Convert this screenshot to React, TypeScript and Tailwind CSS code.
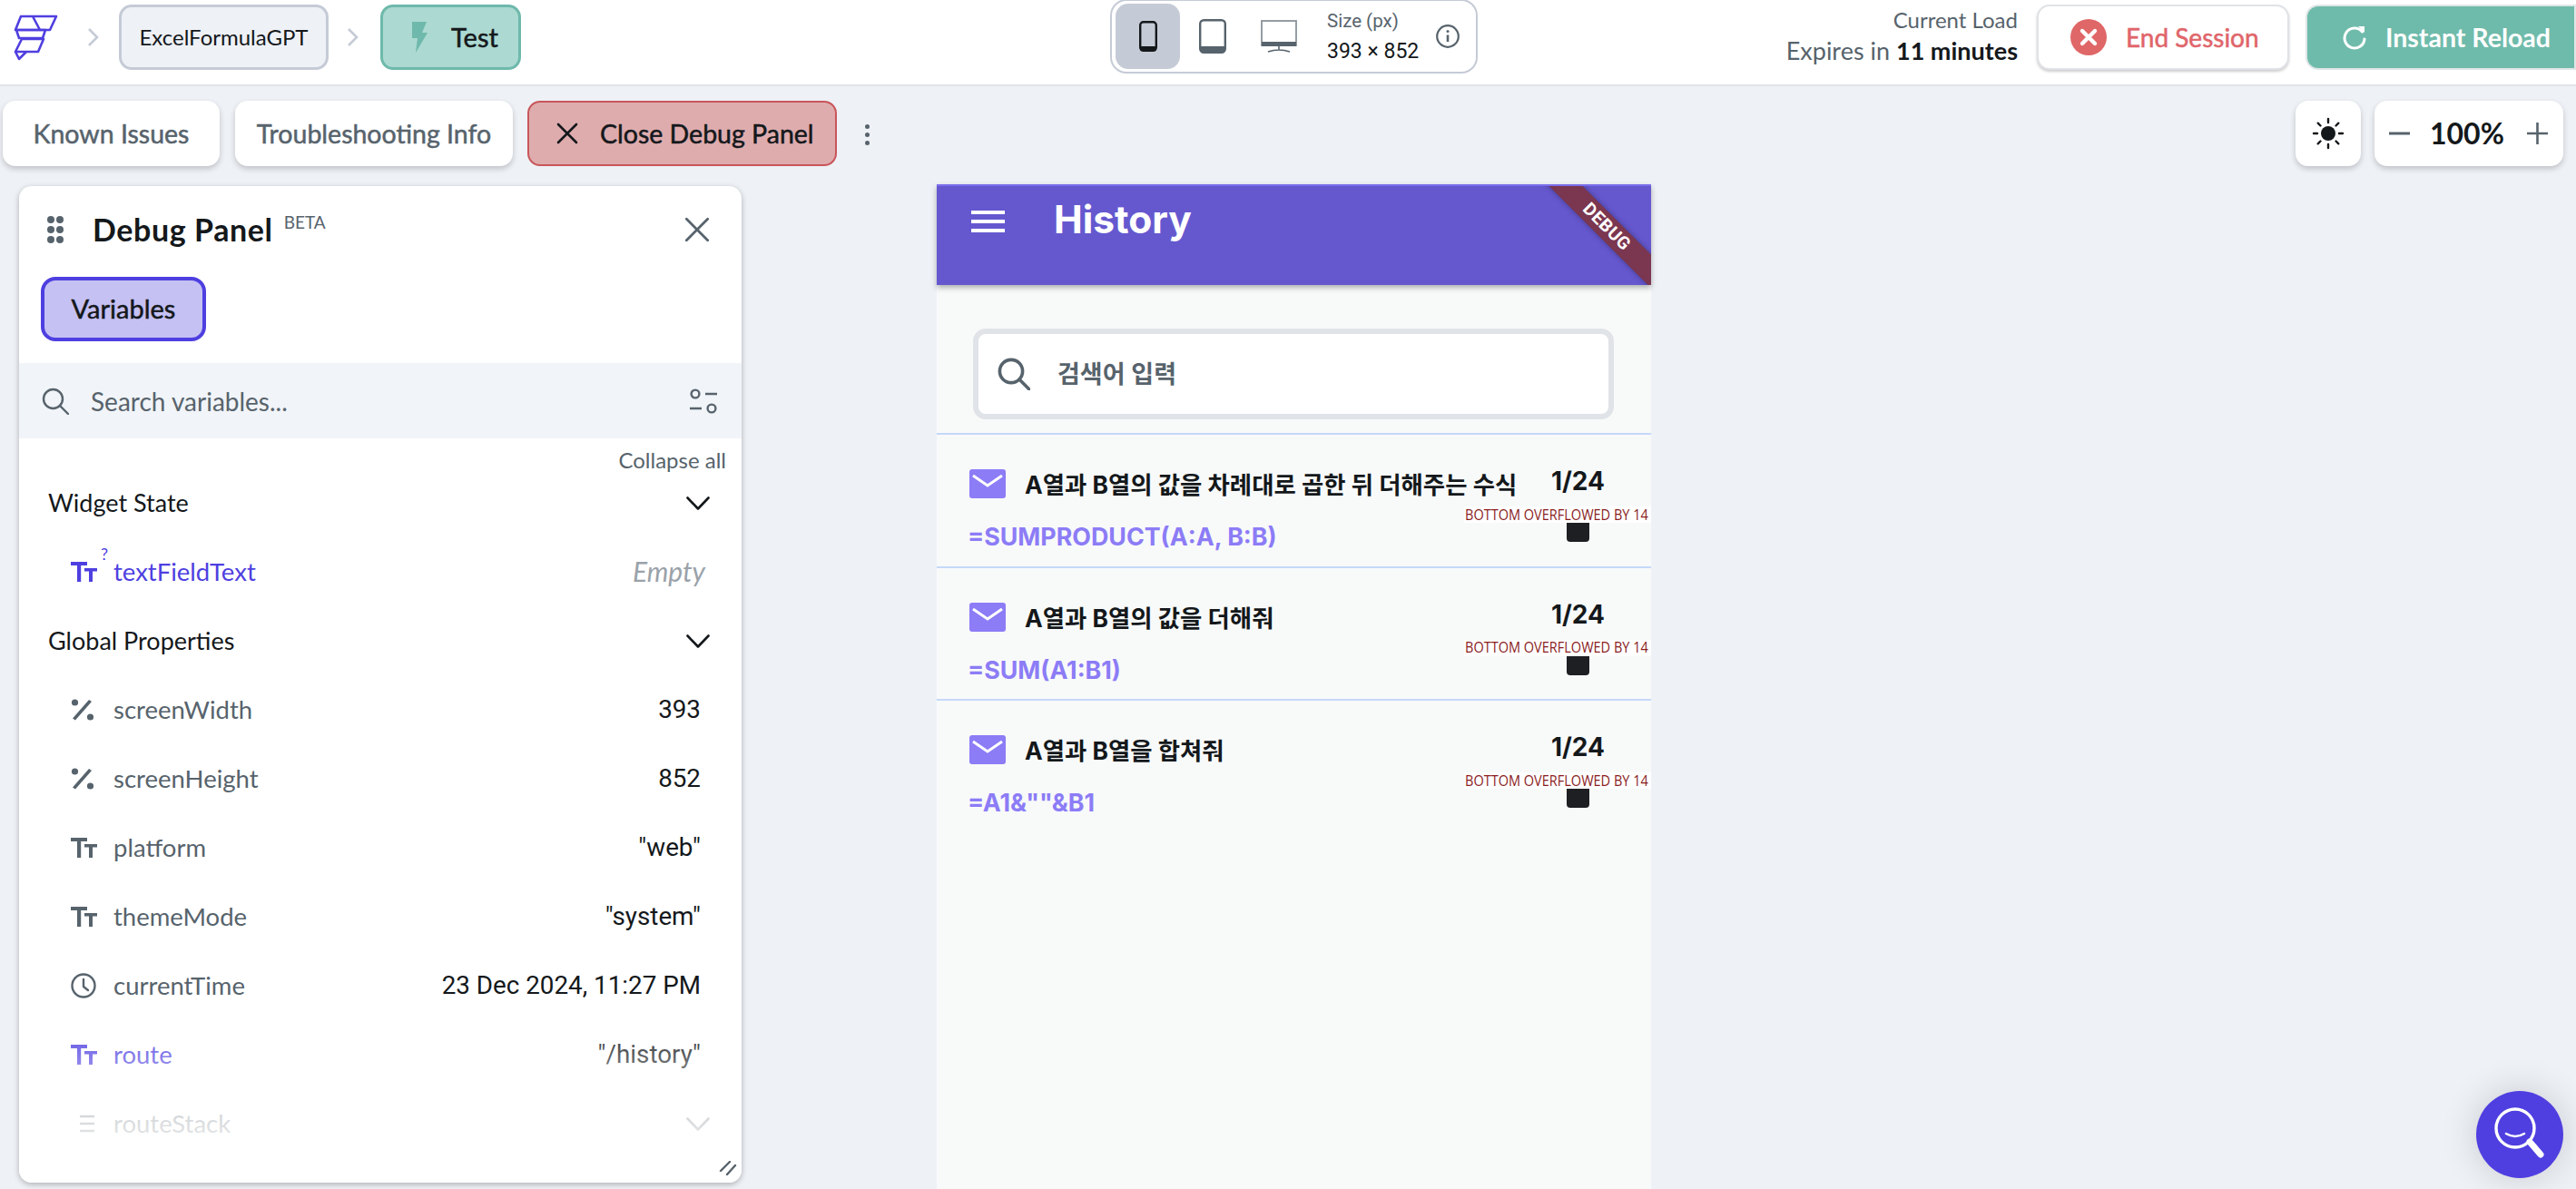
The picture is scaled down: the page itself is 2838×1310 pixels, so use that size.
import React from "react";

const sans = "font-['Lato','Noto_Sans',sans-serif]";
const med = "[-webkit-text-stroke:0.5px]";
const rob = "font-['Roboto',sans-serif]";
const kr = "font-['Inter','Noto_Sans_CJK_KR',sans-serif]";

function Logo() {
  return (
    <svg width="50" height="52" viewBox="14 15 50 52" fill="none" stroke="#4f3fe0" strokeWidth="2.6" strokeLinejoin="round">
      <path d="M23 18 L62 18 L55 33 L17 33 Z M36 18 L44 33" />
      <path d="M18 33 L50 33 L47 42 L21 42 Z" />
      <path d="M24 43 L48 43 L42 57 L17 57 Z" />
      <path d="M17 57 L21 65 L29 57" />
    </svg>
  );
}
function Chev() {
  return (
    <svg width="14" height="20" viewBox="0 0 14 20" fill="none" stroke="#c5cbd6" strokeWidth="2.6"><path d="M2 1 L11 10 L2 19" /></svg>
  );
}
function Bolt({ color = "#6eb9ab" }: { color?: string }) {
  return (
    <svg width="20" height="34" viewBox="0 0 20 34" fill={color}><path d="M3 0 H19 L14 12 H20 L7 34 L9 18 H3 Z" /></svg>
  );
}
function X({ size = 24, color = "#14181b", w = 2.6 }: { size?: number; color?: string; w?: number }) {
  return (
    <svg width={size} height={size} viewBox="0 0 24 24" fill="none" stroke={color} strokeWidth={w} strokeLinecap="round"><path d="M2 2 L22 22 M22 2 L2 22" /></svg>
  );
}
function Down({ color = "#14181b" }: { color?: string }) {
  return (
    <svg width="26" height="15" viewBox="0 0 26 15" fill="none" stroke={color} strokeWidth="2.6" strokeLinecap="round" strokeLinejoin="round"><path d="M1.5 1.5 L13 13.5 L24.5 1.5" /></svg>
  );
}
function TT({ color = "#57636c" }: { color?: string }) {
  return (
    <svg width="29" height="22" viewBox="0 0 29 22" fill={color}>
      <path d="M0 0 H18 V4 H11.2 V22 H7 V4 H0 Z" />
      <path d="M15 7 H29 V10.5 H24 V22 H20 V10.5 H15 Z" />
    </svg>
  );
}
function Pct() {
  return (
    <svg width="26" height="24" viewBox="0 0 26 24" fill="#57636c">
      <circle cx="4.5" cy="4" r="3.6" /><circle cx="21.5" cy="20" r="3.6" />
      <path d="M20 1 L23 3 L5 23.5 L2 21.5 Z" />
    </svg>
  );
}
function Clock() {
  return (
    <svg width="28" height="28" viewBox="0 0 28 28" fill="none" stroke="#57636c" strokeWidth="2.4" strokeLinecap="round" strokeLinejoin="round">
      <circle cx="14" cy="14" r="12.5" /><path d="M14 7 V15 L19 19" />
    </svg>
  );
}
function ListI() {
  return (
    <svg width="28" height="20" viewBox="0 0 28 20" fill="none" stroke="#57636c" strokeWidth="2.4"><path d="M10 2 H26 M10 10 H26 M10 18 H26" /></svg>
  );
}
function SearchI({ size = 30, color = "#57636c", w = 2.4 }: { size?: number; color?: string; w?: number }) {
  return (
    <svg width={size} height={size} viewBox="0 0 30 30" fill="none" stroke={color} strokeWidth={w} strokeLinecap="round">
      <circle cx="12.5" cy="12.5" r="10.5" /><path d="M20 20 L29 29" />
    </svg>
  );
}
function Mail() {
  return (
    <svg width="40" height="32" viewBox="0 0 40 32">
      <rect width="40" height="32" rx="3" fill="#8c7cf6" />
      <path d="M4 7 L20 18 L36 7" fill="none" stroke="#fff" strokeWidth="3" />
    </svg>
  );
}
function Btn({ className, children }: { className: string; children: React.ReactNode }) {
  return <div className={`flex items-center rounded-[14px] h-[72px] ${className}`}>{children}</div>;
}
function VarRow({ icon, name, value, nameCls = "text-[#57636c]", valCls = "text-[#14181b]" }: { icon: React.ReactNode; name: string; value?: React.ReactNode; nameCls?: string; valCls?: string }) {
  return (
    <div className="relative flex items-center justify-between h-[76px] pl-[57px] pr-[45px]">
      <div className="flex items-center">
        <div className="w-[47px] flex items-center">{icon}</div>
        <span className={`${sans} text-[27.5px] leading-none ${nameCls}`}>{name}</span>
      </div>
      <span className={`${rob} text-[27.8px] leading-none ${valCls}`}>{value}</span>
    </div>
  );
}
function Section({ name }: { name: string }) {
  return (
    <div className="flex items-center justify-between h-[76px] pl-[32px] pr-[35px]">
      <span className={`${sans} text-[27px] leading-none text-[#14181b] -mt-[2px]`}>{name}</span>
      <Down />
    </div>
  );
}
function Item({ title, formula }: { title: string; formula: string }) {
  return (
    <div className="relative h-[146.5px] border-t-[2px] border-[#c5d9f8]">
      <div className="flex items-center pt-[37px] pl-[36px]">
        <Mail />
        <span className={`${kr} ml-[21px] mt-[2px] text-[26.4px] leading-[32px] font-bold text-[#14181b] whitespace-nowrap`}>{title}</span>
      </div>
      <div className={`${kr} pl-[34px] mt-[24px] text-[26.8px] leading-[34px] font-bold text-[#8c7cf6] whitespace-nowrap`}>{formula}</div>
      <div className={`${kr} absolute top-[34px] right-[51px] text-[28px] leading-[34px] font-bold text-[#14181b]`}>1/24</div>
      <div className="absolute top-[79px] right-0 w-[206px] h-[18px] bg-white flex items-center pl-[1px]">
        <span className="font-['Open_Sans',sans-serif] text-[16.5px] leading-none text-[#8a1c1c] whitespace-nowrap shrink-0 origin-left scale-x-[0.88]">BOTTOM OVERFLOWED BY 14</span>
      </div>
      <div className="absolute top-[97px] right-[68px] w-[25px] h-[21px] bg-[#1d1f22] rounded-b-[4px]" />
    </div>
  );
}

export default function App() {
  return (
    <div className="w-[2838px] h-[1310px] overflow-hidden bg-[#eef1f6] relative">
      {/* top bar */}
      <div className="h-[95px] bg-white border-b-[2px] border-[#e0e3e7] flex items-start relative">
        <div className="flex items-start pl-[14px] w-[1223px]">
          <div className="mt-[15px]"><Logo /></div>
          <div className="mt-[31px] ml-[32px]"><Chev /></div>
          <div className={`${sans} ml-[21px] mt-[5px] w-[231px] h-[72px] rounded-[14px] bg-[#eef1f6] border-[3px] border-[#c5cbd6] flex items-center justify-center text-[24px] text-[#14181b]`}>ExcelFormulaGPT</div>
          <div className="mt-[31px] ml-[20px]"><Chev /></div>
          <div className={`${sans} ml-[23px] mt-[5px] w-[155px] h-[72px] rounded-[14px] bg-[#acd9d1] border-[3px] border-[#6eb9ab] flex items-center pl-[29px] text-[29px] ${med} text-[#14181b]`}>
            <Bolt /><span className="ml-[26px]">Test</span>
          </div>
        </div>
        <div className="w-[405px] h-[82px] -mt-[1px] rounded-[18px] border-[2px] border-[#c5cbd6] flex items-center pl-[4px]">
          <div className="w-[71px] h-[72px] rounded-[14px] bg-[#c5cbd6] flex items-center justify-center">
            <svg width="20" height="34" viewBox="0 0 20 34"><rect x="1.2" y="1.2" width="17.6" height="31.6" rx="3.5" fill="none" stroke="#14181b" strokeWidth="2.4" /><rect x="1" y="28" width="18" height="5.5" rx="2" fill="#14181b" /></svg>
          </div>
          <div className="ml-[21px]">
            <svg width="30" height="38" viewBox="0 0 30 38"><rect x="1.2" y="1.2" width="27.6" height="35.6" rx="4" fill="none" stroke="#57636c" strokeWidth="2.4" /><path d="M1 30 H29 V33 A4 4 0 0 1 25 37 H5 A4 4 0 0 1 1 33 Z" fill="#57636c" /></svg>
          </div>
          <div className="ml-[38px]">
            <svg width="40" height="36" viewBox="0 0 40 36"><rect x="1" y="1" width="38" height="27" fill="none" stroke="#8a939a" strokeWidth="1.8" /><rect x="1" y="24" width="38" height="5" fill="#57636c" /><path d="M20 29 V33 M8 35 Q20 31 32 35" fill="none" stroke="#57636c" strokeWidth="1.6" /></svg>
          </div>
          <div className={`${rob} ml-[33px] w-[110px]`}>
            <div className="text-[20.5px] leading-[24px] text-[#57636c]">Size (px)</div>
            <div className="mt-[10px] text-[23px] leading-[24px] text-[#14181b] whitespace-nowrap">393 × 852</div>
          </div>
          <div className="ml-[10px]">
            <svg width="26" height="26" viewBox="0 0 26 26" fill="none" stroke="#57636c" strokeWidth="2.2"><circle cx="13" cy="13" r="11.8" /><path d="M13 11.5 V19" strokeWidth="2.6" /><circle cx="13" cy="7.6" r="1.5" fill="#57636c" stroke="none" /></svg>
          </div>
        </div>
        <div className={`${sans} w-[595px] pt-[10px] text-right`}>
          <div className="text-[24px] leading-[24px] text-[#57636c]">Current Load</div>
          <div className="mt-[7px] text-[27px] leading-[30px] text-[#57636c]">Expires in <span className="font-bold text-[#14181b]">11 minutes</span></div>
        </div>
        <div className="absolute left-[2244px] top-[5px] w-[278px] h-[72px] rounded-[14px] bg-white border-[2px] border-[#e0e3e7] shadow-[0_2px_3px_rgba(0,0,0,0.2)] flex items-center pl-[35px]">
          <svg width="40" height="40" viewBox="0 0 40 40"><circle cx="20" cy="20" r="20" fill="#e06767" /><path d="M13 13 L27 27 M27 13 L13 27" stroke="#fff" strokeWidth="4.4" strokeLinecap="round" /></svg>
          <span className={`${sans} ml-[21px] text-[28px] ${med} text-[#e0656a]`}>End Session</span>
        </div>
        <div className="absolute left-[2540px] top-[5px] w-[298px] h-[72px] rounded-l-[14px] bg-[#6fbbab] border-[2px] border-[#dfe6e6] flex items-center pl-[39px]">
          <svg width="26" height="30" viewBox="0 0 26 30" fill="none" stroke="#fff" strokeWidth="3" strokeLinecap="round"><path d="M21.5 9 A11 11 0 1 0 24 17" /><path d="M17 3 H24 V10 Z" fill="#fff" strokeWidth="0" /></svg>
          <span className={`${sans} ml-[21px] text-[28.5px] font-bold text-white whitespace-nowrap`}>Instant Reload</span>
        </div>
      </div>

      {/* action row */}
      <div className="h-[108px] flex items-start pt-[16px] pl-[3px]">
        <Btn className="bg-white w-[239px] justify-center shadow-[0_3px_6px_rgba(0,0,0,0.2)]">
          <span className={`${sans} text-[28.5px] ${med} text-[#57636c]`}>Known Issues</span>
        </Btn>
        <Btn className="bg-white w-[306px] ml-[17px] justify-center shadow-[0_3px_6px_rgba(0,0,0,0.2)]">
          <span className={`${sans} text-[28.5px] ${med} text-[#57636c]`}>Troubleshooting Info</span>
        </Btn>
        <Btn className="bg-[#dfacae] border-[2px] border-[#c8565a] w-[341px] ml-[16px] pl-[30px]">
          <X size={24} />
          <span className={`${sans} ml-[24px] text-[28.5px] ${med} text-[#14181b] whitespace-nowrap`}>Close Debug Panel</span>
        </Btn>
        <div className="ml-[31px] mt-[26px] flex flex-col gap-[4px]">
          <div className="w-[5px] h-[5px] rounded-full bg-[#57636c]" />
          <div className="w-[5px] h-[5px] rounded-full bg-[#57636c]" />
          <div className="w-[5px] h-[5px] rounded-full bg-[#57636c]" />
        </div>
        <Btn className="bg-white w-[72px] ml-[1571px] justify-center shadow-[0_3px_6px_rgba(0,0,0,0.2)]">
          <svg width="36" height="36" viewBox="0 0 36 36" stroke="#14181b" strokeWidth="2.4" strokeLinecap="round">
            <circle cx="18" cy="18" r="8" fill="#14181b" stroke="none" />
            <path d="M18 2 V6 M18 30 V34 M2 18 H6 M30 18 H34 M6.7 6.7 L9.5 9.5 M26.5 26.5 L29.3 29.3 M29.3 6.7 L26.5 9.5 M9.5 26.5 L6.7 29.3" />
          </svg>
        </Btn>
        <Btn className="bg-white w-[208px] ml-[15px] pl-[16px] shadow-[0_3px_6px_rgba(0,0,0,0.2)]">
          <svg width="23" height="24" viewBox="0 0 23 24" stroke="#57636c" strokeWidth="3"><path d="M0 12 H23" /></svg>
          <span className={`${sans} ml-[22px] text-[32px] font-bold text-[#14181b]`}>100%</span>
          <svg className="ml-[25px]" width="23" height="24" viewBox="0 0 23 24" stroke="#57636c" strokeWidth="2.6"><path d="M0 12 H23 M11.5 0 V24" /></svg>
        </Btn>
      </div>

      {/* main */}
      <div className="flex items-start pl-[21px]">
        <div className="relative mt-[2px] w-[796px] h-[1098px] bg-white rounded-[14px] shadow-[0_2px_6px_rgba(0,0,0,0.28)] overflow-hidden">
          <div className="h-[96px] flex items-center pl-[30px] pr-[35px] justify-between">
            <div className="flex items-center">
              <svg width="20" height="32" viewBox="0 0 20 32" fill="#57636c">
                <circle cx="5" cy="5" r="4" /><circle cx="15" cy="5" r="4" />
                <circle cx="5" cy="16" r="4" /><circle cx="15" cy="16" r="4" />
                <circle cx="5" cy="27" r="4" /><circle cx="15" cy="27" r="4" />
              </svg>
              <span className={`${sans} ml-[31px] text-[34px] leading-none font-bold tracking-[0.6px] text-[#14181b]`}>Debug Panel</span>
              <span className={`${sans} ml-[12px] -mt-[18px] text-[19px] leading-none text-[#57636c]`}>BETA</span>
            </div>
            <X size={28} color="#57636c" w={2.4} />
          </div>
          <div className="pl-[24px] mt-[4px]">
            <div className={`${sans} w-[182px] h-[71px] rounded-[16px] bg-[#c5c1f3] border-[4px] border-[#4e3fe0] flex items-center justify-center pb-[2px] text-[29px] ${med} text-[#14181b]`}>Variables</div>
          </div>
          <div className="mt-[24px] h-[83px] bg-[#f1f4f8] flex items-center justify-between pl-[25px] pr-[27px]">
            <div className="flex items-center">
              <SearchI />
              <span className={`${sans} ml-[24px] text-[28px] leading-none text-[#57636c]`}>Search variables...</span>
            </div>
            <svg width="30" height="28" viewBox="0 0 30 28" fill="none" stroke="#57636c" strokeWidth="2.4">
              <circle cx="6" cy="6" r="4.4" /><path d="M17 6 H30 M0 22 H13" /><circle cx="24" cy="22" r="4.4" />
            </svg>
          </div>
          <div className={`${sans} h-[33px] pr-[17px] text-right text-[24px] leading-[48px] text-[#57636c]`}>Collapse all</div>
          <Section name="Widget State" />
          <div className="relative">
            <VarRow icon={<TT color="#4e3fe0" />} name="textFieldText" nameCls="text-[#4e3fe0]" value={<span className={`${sans} italic text-[#9aa2a9] text-[30px] mr-[-5px]`}>Empty</span>} />
            <span className={`${sans} absolute left-[90px] top-[9px] text-[18px] leading-none text-[#4e3fe0]`}>?</span>
          </div>
          <Section name="Global Properties" />
          <VarRow icon={<Pct />} name="screenWidth" value="393" />
          <VarRow icon={<Pct />} name="screenHeight" value="852" />
          <VarRow icon={<TT />} name="platform" value={'"web"'} />
          <VarRow icon={<TT />} name="themeMode" value={'"system"'} />
          <VarRow icon={<Clock />} name="currentTime" value="23 Dec 2024, 11:27 PM" />
          <VarRow icon={<TT color="#4e3fe0" />} name="route" nameCls="text-[#4e3fe0]" value={'"/history"'} />
          <div className="relative flex items-center justify-between h-[76px] pl-[57px] pr-[35px]">
            <div className="flex items-center">
              <div className="w-[47px] flex items-center"><ListI /></div>
              <span className={`${sans} text-[27.5px] leading-none text-[#57636c]`}>routeStack</span>
            </div>
            <Down color="#57636c" />
          </div>
          <div className="absolute left-0 right-0 bottom-0 h-[180px] bg-gradient-to-b from-white/0 via-white/70 to-white" />
          <svg className="absolute right-[5px] bottom-[8px]" width="20" height="16" viewBox="0 0 20 16" stroke="#57636c" strokeWidth="2.4" strokeLinecap="round"><path d="M2 11 L12 1 M9 15 L18 5" /></svg>
        </div>

        <div className="ml-[215px] w-[787px] h-[1107px] bg-[#f8fafa]">
          <div className="relative h-[111px] bg-[#6558cf] border-t-[2px] border-[#7a6eeb] shadow-[0_3px_6px_rgba(0,0,0,0.3)] overflow-hidden flex items-start">
            <div className="ml-[38px] mt-[27px] w-[37px] flex flex-col gap-[6px]">
              <div className="h-[4px] bg-white" /><div className="h-[4px] bg-white" /><div className="h-[4px] bg-white" />
            </div>
            <span className={`${kr} ml-[54px] mt-[11px] text-[42.5px] leading-[52px] font-bold text-white`}>History</span>
            <div className="absolute top-[32px] right-[-51px] w-[200px] h-[26px] rotate-45 bg-[#7b3650] shadow-[0_0_6px_rgba(0,0,0,0.35)] flex items-center justify-center font-['Roboto',sans-serif] text-[19.5px] leading-none font-bold tracking-[0.5px] text-white">DEBUG</div>
          </div>
          <div className="h-[48px]" />
          <div className="ml-[40px] w-[706px] h-[100px] bg-white rounded-[14px] border-[6px] border-[#e0e3e7] flex items-center pl-[21px]">
            <SearchI size={36} w={3} />
            <span className={`${kr} ml-[30px] text-[27px] leading-none font-semibold text-[#57636c]`}>검색어 입력</span>
          </div>
          <div className="h-[15px]" />
          <Item title="A열과 B열의 값을 차례대로 곱한 뒤 더해주는 수식" formula="=SUMPRODUCT(A:A, B:B)" />
          <Item title="A열과 B열의 값을 더해줘" formula="=SUM(A1:B1)" />
          <Item title="A열과 B열을 합쳐줘" formula={'=A1&""&B1'} />
        </div>
      </div>

      {/* FAB */}
      <div className="absolute left-[2728px] top-[1202px] w-[96px] h-[96px] rounded-full bg-[#4f3fe0] shadow-[0_0_40px_rgba(0,0,0,0.16)] flex items-center justify-center">
        <svg width="60" height="60" viewBox="0 0 60 60" fill="none" stroke="#fff">
          <circle cx="25" cy="23" r="21" strokeWidth="3.4" />
          <path d="M15 29 Q25 35 35 29" strokeWidth="2.6" strokeLinecap="round" />
          <path d="M41 38 L53 52" strokeWidth="7" strokeLinecap="round" />
        </svg>
      </div>
    </div>
  );
}
